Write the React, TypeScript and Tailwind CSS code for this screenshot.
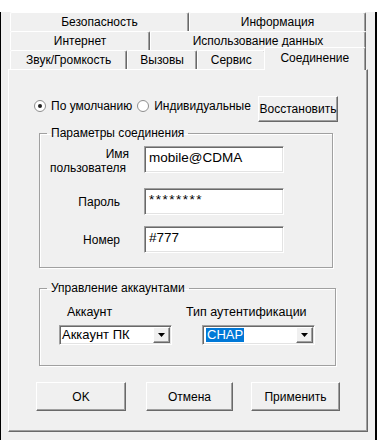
import type { ReactNode } from 'react';

const font = 'font-["Liberation_Sans",Arial,sans-serif] text-[12px] leading-[14px] text-black';

const raised =
  'bg-[#f0f0f0] border-t border-l border-white border-r border-b border-r-[#696969] border-b-[#696969] shadow-[inset_-1px_-1px_0_#a0a0a0]';
const sunken =
  'bg-white border-t border-l border-[#a0a0a0] border-r border-b border-r-white border-b-white shadow-[inset_1px_1px_0_#696969,inset_-1px_-1px_0_#e3e3e3]';

const Tab = ({ label, className }: { label: string; className: string }) => (
  <div
    className={`${className} flex items-center justify-center bg-[#f0f0f0] border-t border-l border-white border-r border-r-[#696969] shadow-[inset_-1px_0_0_#a0a0a0] rounded-t-[2px]`}
  >
    {label}
  </div>
);

const Radio = ({ checked }: { checked?: boolean }) => (
  <span className="w-[12px] h-[12px] rounded-full bg-white border border-[#8e8e8e] flex items-center justify-center shrink-0">
    {checked && <span className="w-[4px] h-[4px] rounded-full bg-[#222]" />}
  </span>
);

const Button = ({ children, className }: { children: ReactNode; className: string }) => (
  <div className={`${className} ${raised} flex items-center justify-center`}>{children}</div>
);

const Field = ({ value, className }: { value: string; className?: string }) => (
  <div className={`w-[140px] h-[27px] ${sunken} pl-[4px] pt-[3px] text-[13.5px] leading-[16px] ${className ?? ''}`}>
    {value}
  </div>
);

const Select = ({ children }: { children: ReactNode }) => (
  <div className={`w-[113px] h-[20px] ${sunken} flex items-center pl-[2px] pr-[1px] text-[13px]`}>
    <div className="flex-1 flex items-center">{children}</div>
    <div className={`w-[17px] h-[16px] ${raised} flex items-center justify-center`}>
      <svg width="7" height="4" viewBox="0 0 7 4">
        <path d="M0 0h7L3.5 4z" fill="#000" />
      </svg>
    </div>
  </div>
);

export default function App() {
  return (
    <div className={`w-[377px] h-[440px] bg-[#f0f0f0] border-l border-r-2 border-b-2 border-black ${font}`}>
      {/* tab rows */}
      <div className="ml-[9px] mt-[12px] w-[356px]">
        <div className="flex">
          <Tab label="Безопасность" className="w-[179px] h-[19px]" />
          <Tab label="Информация" className="w-[177px] h-[19px]" />
        </div>
        <div className="flex">
          <Tab label="Интернет" className="w-[140px] h-[19px]" />
          <Tab label="Использование данных" className="w-[216px] h-[19px]" />
        </div>
        <div className="flex items-start -mt-[3px] h-[23px]">
          <Tab label="Звук/Громкость" className="w-[118px] h-[19px] mt-[3px]" />
          <Tab label="Вызовы" className="w-[70px] h-[19px] mt-[3px]" />
          <Tab label="Сервис" className="w-[69px] h-[19px] mt-[3px]" />
          <Tab label="Соединение" className="w-[103px] h-[23px] -ml-[2px] relative z-10 pb-[3px]" />
        </div>
      </div>

      {/* panel */}
      <div className={`ml-[7px] -mt-[1px] w-[360px] h-[363px] ${raised}`}>
        <div className="flex mt-[26px] h-[26px]">
          <div className="ml-[25px] w-[224px] mt-[3px] h-[14px] flex items-center">
            <Radio checked />
            <span className="ml-[5px]">По умолчанию</span>
            <span className="ml-[5px]"><Radio /></span>
            <span className="ml-[5px]">Индивидуальные</span>
          </div>
          <Button className="w-[80px] h-[26px]">Восстановить</Button>
        </div>

        <fieldset className="ml-[30px] mt-[4px] w-[294px] h-[142px] border border-[#a0a0a0] shadow-[1px_1px_0_#fff,inset_1px_1px_0_#fff]">
          <legend className="ml-[7px] px-[4px]">Параметры соединения</legend>
          <div className="flex mt-[6px]">
            <div className="w-[104px] text-right mt-[1px]">
              <div className="pr-[15px]">Имя</div>
              <div className="pr-[18px]">пользователя</div>
            </div>
            <Field value="mobile@CDMA" />
          </div>
          <div className="flex items-center mt-[13px]">
            <div className="w-[104px] text-right pr-[24px]">Пароль</div>
            <Field value="********" className="tracking-[1.5px]" />
          </div>
          <div className="flex items-center mt-[11px]">
            <div className="w-[104px] text-right pr-[24px]">Номер</div>
            <Field value="#777" />
          </div>
        </fieldset>

        <fieldset className="ml-[30px] mt-[13px] w-[297px] h-[85px] border border-[#a0a0a0] shadow-[1px_1px_0_#fff,inset_1px_1px_0_#fff]">
          <legend className="ml-[7px] px-[4px]">Управление аккаунтами</legend>
          <div className="flex mt-[10px] ml-[27px] text-[12.5px]">
            <div className="w-[119px]">Аккаунт</div>
            <div>Тип аутентификации</div>
          </div>
          <div className="flex mt-[6px] ml-[19px] gap-[30px]">
            <Select>Аккаунт ПК</Select>
            <Select>
              <span className="bg-[#0078d7] text-white px-[1px] ml-[1px]">CHAP</span>
            </Select>
          </div>
        </fieldset>

        <div className="flex mt-[16px] ml-[27px]">
          <Button className="w-[90px] h-[29px]">OK</Button>
          <Button className="w-[87px] h-[29px] ml-[20px]">Отмена</Button>
          <Button className="w-[89px] h-[29px] ml-[18px]">Применить</Button>
        </div>
      </div>
    </div>
  );
}
